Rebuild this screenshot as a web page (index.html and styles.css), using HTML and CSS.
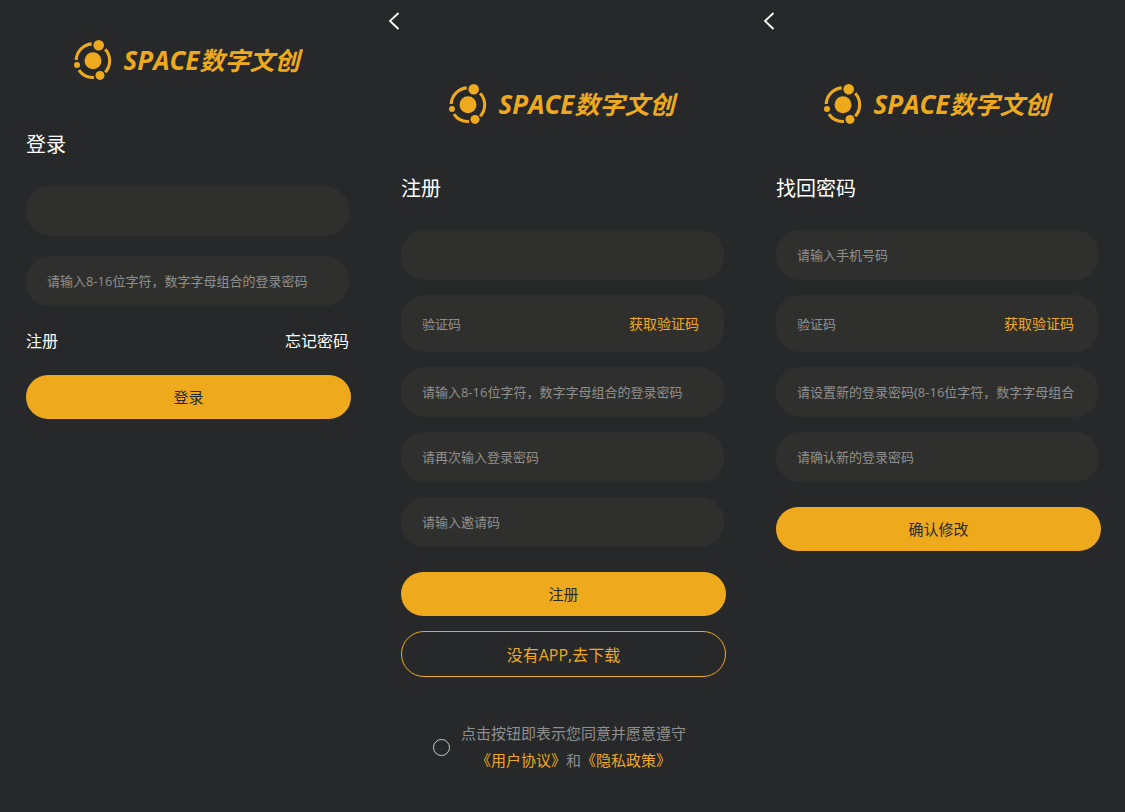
FILE: index.html
```html
<!DOCTYPE html>
<html lang="zh-CN">
<head>
    <meta charset="UTF-8">
    <meta name="viewport" content="width=device-width, initial-scale=1.0">
    <title>SPACE数字文创</title>
    <link rel="stylesheet" href="styles.css">
</head>
<body>
    <!-- logo图标，三个页面共用 -->
    <svg class="symbols" aria-hidden="true">
        <symbol id="logo-icon" viewBox="7 6 38 40">
            <g fill="none" stroke="currentColor" stroke-width="3.1">
                <path d="M9.2 26A17 17 0 0 1 24.7 9.9"/>
                <path d="M38.2 15.2A17 17 0 0 1 38.2 38.2"/>
                <path d="M11.9 36.2A17 17 0 0 0 27 43.5"/>
            </g>
            <g fill="currentColor">
                <circle cx="26" cy="26.7" r="8.5"/>
                <circle cx="31.7" cy="11.3" r="5.3"/>
                <circle cx="33" cy="41.4" r="4.5"/>
                <circle cx="10" cy="31" r="3"/>
            </g>
        </symbol>
        <symbol id="back-icon" viewBox="0 0 12 18">
            <path d="M10.5 1L2 9l8.5 8" fill="none" stroke="currentColor" stroke-width="1.8"/>
        </symbol>
    </svg>

    <main class="pages">
        <!-- 登录 -->
        <section class="page">
            <form class="content">
                <div class="logo">
                    <svg class="logo-icon"><use href="#logo-icon"/></svg>
                    <span class="logo-text"><span class="logo-en">SPACE</span>数字文创</span>
                </div>
                <h1 class="title">登录</h1>
                <div class="fields fields-login">
                    <input class="field" type="text" aria-label="手机号码">
                    <input class="field" type="password" aria-label="登录密码" placeholder="请输入8-16位字符，数字字母组合的登录密码">
                </div>
                <div class="links">
                    <a href="#register">注册</a>
                    <a href="#forget">忘记密码</a>
                </div>
                <button class="btn" type="button">登录</button>
            </form>
        </section>

        <!-- 注册 -->
        <section class="page" id="register">
            <header class="navbar">
                <button class="back" type="button" aria-label="返回"><svg class="back-icon"><use href="#back-icon"/></svg></button>
            </header>
            <form class="content">
                <div class="logo">
                    <svg class="logo-icon"><use href="#logo-icon"/></svg>
                    <span class="logo-text"><span class="logo-en">SPACE</span>数字文创</span>
                </div>
                <h1 class="title">注册</h1>
                <div class="fields">
                    <input class="field" type="text" aria-label="手机号码">
                    <div class="field field-code">
                        <input class="code-input" type="text" aria-label="验证码" placeholder="验证码">
                        <button class="code-btn" type="button">获取验证码</button>
                    </div>
                    <input class="field" type="password" aria-label="登录密码" placeholder="请输入8-16位字符，数字字母组合的登录密码">
                    <input class="field" type="password" aria-label="确认密码" placeholder="请再次输入登录密码">
                    <input class="field" type="text" aria-label="邀请码" placeholder="请输入邀请码">
                </div>
                <button class="btn btn-submit" type="button">注册</button>
                <button class="btn btn-outline" type="button">没有APP,去下载</button>
                <div class="agreement">
                    <input class="agree-check" type="checkbox" id="agree">
                    <div class="agree-text">
                        <label for="agree">点击按钮即表示您同意并愿意遵守</label><br>
                        <a href="#user">《用户协议》</a>和<a href="#privacy">《隐私政策》</a>
                    </div>
                </div>
            </form>
        </section>

        <!-- 找回密码 -->
        <section class="page" id="forget">
            <header class="navbar">
                <button class="back" type="button" aria-label="返回"><svg class="back-icon"><use href="#back-icon"/></svg></button>
            </header>
            <form class="content">
                <div class="logo">
                    <svg class="logo-icon"><use href="#logo-icon"/></svg>
                    <span class="logo-text"><span class="logo-en">SPACE</span>数字文创</span>
                </div>
                <h1 class="title">找回密码</h1>
                <div class="fields">
                    <input class="field" type="text" aria-label="手机号码" placeholder="请输入手机号码">
                    <div class="field field-code">
                        <input class="code-input" type="text" aria-label="验证码" placeholder="验证码">
                        <button class="code-btn" type="button">获取验证码</button>
                    </div>
                    <input class="field" type="password" aria-label="新密码" placeholder="请设置新的登录密码(8-16位字符，数字字母组合)">
                    <input class="field" type="password" aria-label="确认新密码" placeholder="请确认新的登录密码">
                </div>
                <button class="btn btn-submit" type="button">确认修改</button>
            </form>
        </section>
    </main>
</body>
</html>
```
FILE: styles.css
```css
* {
    box-sizing: border-box;
}
body {
    margin: 0;
    background-color: #26282a;
    color: #fff;
    font-family: "Open Sans", "Noto Sans CJK SC", sans-serif;
    font-size: 16px;
}
input, button {
    font-family: inherit;
    border: none;
    outline: none;
}
button {
    cursor: pointer;
}
a {
    text-decoration: none;
}
.symbols {
    display: none;
}
.pages {
    display: grid;
    grid-template-columns: repeat(3, 1fr);
    min-height: 100vh;
}
.navbar {
    display: flex;
    height: 44px;
    padding: 12px 13px;
}
.back {
    display: flex;
    padding: 0;
    height: 18px;
    background: none;
    color: #fff;
}
.back-icon {
    width: 12px;
    height: 18px;
}
.content {
    padding: 40px 24px 0 26px;
}

/* logo */
.logo {
    display: flex;
    justify-content: center;
    align-items: center;
    gap: 12px;
    height: 40px;
    padding-right: 4px;
    color: #eeaa1c;
}
.logo-icon {
    width: 38px;
    height: 40px;
}
.logo-text {
    font-size: 25px;
    font-weight: bold;
    font-style: italic;
    line-height: 38px;
    white-space: nowrap;
}
.logo-en {
    font-size: 26px;
}
.title {
    margin: 50px 0 26px;
    font-size: 20px;
    font-weight: normal;
    line-height: 30px;
}

/* 输入框 */
.fields {
    display: flex;
    flex-direction: column;
    gap: 15px;
    padding-right: 2px;
}
.fields-login {
    gap: 20px;
}
.field {
    width: 100%;
    height: 50px;
    padding: 0 25px 0 21px;
    border-radius: 24px;
    background-color: #2f2f2d;
    color: #fff;
    font-size: 13px;
}
.field-code {
    display: flex;
    align-items: center;
    height: 57px;
}
.code-input {
    flex: 1;
    min-width: 0;
    padding: 0;
    background: none;
    color: #fff;
    font-size: 13px;
}
.code-btn {
    padding: 0 0 2px;
    background: none;
    color: #eeaa1c;
    font-size: 14px;
}
::placeholder {
    color: #8f8f8f;
}
.links {
    display: flex;
    justify-content: space-between;
    margin: 23px 0 22px;
    padding-right: 2px;
    line-height: 24px;
}
.links a {
    color: #fff;
}

/* 按钮 */
.btn {
    display: block;
    width: 100%;
    height: 44px;
    padding: 0 0 2px;
    border-radius: 23px;
    background-color: #eeaa1c;
    color: #26282a;
    font-size: 15px;
}
.btn-submit {
    margin-top: 25px;
}
.btn-outline {
    height: 46px;
    margin-top: 15px;
    padding: 0;
    border: 1px solid #eeaa1c;
    background: none;
    color: #eeaa1c;
    font-size: 16px;
}

/* 协议 */
.agreement {
    display: flex;
    align-items: center;
    gap: 11px;
    margin-top: 43px;
    padding-left: 32px;
    color: #8f8f8f;
    font-size: 15px;
    line-height: 27px;
}
.agree-check {
    appearance: none;
    width: 17px;
    height: 17px;
    margin: 0;
    border: 1px solid #c8c8c8;
    border-radius: 50%;
}
.agree-check:checked {
    background-color: #eeaa1c;
}
.agree-text {
    text-align: center;
}
.agree-text a {
    color: #eeaa1c;
}
```
